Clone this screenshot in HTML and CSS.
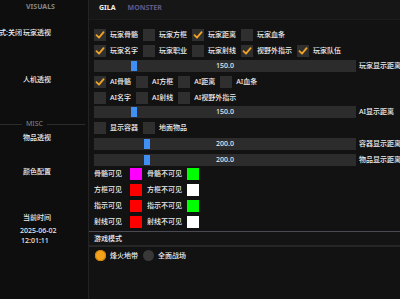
FILE: index.html
```html
<!DOCTYPE html>
<html lang="zh">
<head>
<meta charset="UTF-8">
<title>Visuals</title>
<link rel="stylesheet" href="styles.css">
</head>
<body>

<div class="app">

  <!-- left menu -->
  <aside class="side">
    <div class="side-title">VISUALS</div>
    <div class="side-label side-mode"><span class="mode">模式:关闭</span><span>玩家透视</span></div>
    <div class="side-label gap-ai">人机透视</div>
    <div class="side-sep"><span>MISC</span></div>
    <div class="side-label gap-item">物品透视</div>
    <div class="side-label gap-color">颜色配置</div>
    <div class="side-label gap-time">当前时间</div>
    <div class="side-date">2025-06-02</div>
    <div class="side-clock">12:01:11</div>
  </aside>

  <main class="main">
    <nav class="tabs">
      <span class="tab active">GILA</span>
      <span class="tab">MONSTER</span>
    </nav>

    <div class="content">
      <!-- player -->
      <div class="row">
        <label class="check"><i class="box on"><svg viewBox="0 0 12 12"><polyline points="2.5,6.2 5,8.6 9.6,3.2"/></svg></i>玩家骨骼</label>
        <label class="check"><i class="box"></i>玩家方框</label>
        <label class="check"><i class="box on"><svg viewBox="0 0 12 12"><polyline points="2.5,6.2 5,8.6 9.6,3.2"/></svg></i>玩家距离</label>
        <label class="check"><i class="box"></i>玩家血条</label>
      </div>
      <div class="row">
        <label class="check"><i class="box on"><svg viewBox="0 0 12 12"><polyline points="2.5,6.2 5,8.6 9.6,3.2"/></svg></i>玩家名字</label>
        <label class="check"><i class="box"></i>玩家职业</label>
        <label class="check"><i class="box"></i>玩家射线</label>
        <label class="check"><i class="box on"><svg viewBox="0 0 12 12"><polyline points="2.5,6.2 5,8.6 9.6,3.2"/></svg></i>视野外指示</label>
        <label class="check"><i class="box on"><svg viewBox="0 0 12 12"><polyline points="2.5,6.2 5,8.6 9.6,3.2"/></svg></i>玩家队伍</label>
      </div>
      <div class="slider-row up1">
        <div class="slider"><i class="grab" style="margin-left:37px"></i><span class="value">150.0</span></div>
        <span>玩家显示距离</span>
      </div>

      <!-- ai -->
      <div class="row">
        <label class="check"><i class="box on"><svg viewBox="0 0 12 12"><polyline points="2.5,6.2 5,8.6 9.6,3.2"/></svg></i>AI骨骼</label>
        <label class="check"><i class="box"></i>AI方框</label>
        <label class="check"><i class="box"></i>AI距离</label>
        <label class="check"><i class="box"></i>AI血条</label>
      </div>
      <div class="row">
        <label class="check"><i class="box"></i>AI名字</label>
        <label class="check"><i class="box"></i>AI射线</label>
        <label class="check"><i class="box"></i>AI视野外指示</label>
      </div>
      <div class="slider-row up2">
        <div class="slider"><i class="grab" style="margin-left:37px"></i><span class="value">150.0</span></div>
        <span>AI显示距离</span>
      </div>

      <!-- misc -->
      <div class="row">
        <label class="check"><i class="box"></i>显示容器</label>
        <label class="check"><i class="box"></i>地面物品</label>
      </div>
      <div class="slider-row">
        <div class="slider"><i class="grab" style="margin-left:50px"></i><span class="value">200.0</span></div>
        <span>容器显示距离</span>
      </div>
      <div class="slider-row">
        <div class="slider"><i class="grab" style="margin-left:50px"></i><span class="value">200.0</span></div>
        <span>物品显示距离</span>
      </div>

      <!-- colours -->
      <div class="color-row up2">
        <span class="clabel">骨骼可见</span><i class="swatch magenta"></i>
        <span class="clabel wide">骨骼不可见</span><i class="swatch green"></i>
      </div>
      <div class="color-row">
        <span class="clabel">方框可见</span><i class="swatch red"></i>
        <span class="clabel wide">方框不可见</span><i class="swatch white"></i>
      </div>
      <div class="color-row">
        <span class="clabel">指示可见</span><i class="swatch red"></i>
        <span class="clabel wide">指示不可见</span><i class="swatch green"></i>
      </div>
      <div class="color-row">
        <span class="clabel">射线可见</span><i class="swatch red"></i>
        <span class="clabel wide">射线不可见</span><i class="swatch white"></i>
      </div>

      <div class="mode-head">游戏模式</div>
      <div class="radio-row">
        <label class="radio"><i class="dot on"></i>烽火地带</label>
        <label class="radio"><i class="dot"></i>全面战场</label>
      </div>
    </div>
  </main>

</div>

</body>
</html>
```

FILE: styles.css
```css
body {
  margin: 0;
  background: #121212;
  color: #ededed;
  font-family: "Noto Sans", "Noto Sans CJK SC", sans-serif;
  font-size: 7px;
  font-weight: 500;
  line-height: 10px;
  overflow: hidden;
}

.app {
  display: flex;
  height: 299px;
}

/* sidebar */
.side {
  width: 88px;
  flex: none;
  background: #0e0e0e;
  border-right: 1px solid #232323;
  overflow: hidden;
  white-space: nowrap;
}
.side-title {
  height: 13px;
  line-height: 13px;
  padding-right: 7px;
  text-align: center;
  font-weight: bold;
  color: #858585;
}
.side-label {
  height: 10px;
  padding-left: 23px;
}
.side-mode {
  display: flex;
  margin-top: 15px;
}
.mode {
  margin-left: -31px;
  margin-right: 1px;
}
.gap-ai { margin-top: 37px; }
.gap-item { margin-top: 4px; }
.gap-color { margin-top: 24px; }
.gap-time { margin-top: 36px; }

.side-sep {
  margin-top: 34px;
  height: 10px;
  display: flex;
  align-items: center;
  gap: 4px;
  color: #858585;
  font-weight: normal;
}
.side-sep::before,
.side-sep::after {
  content: "";
  height: 1px;
  background: #2c2c2c;
}
.side-sep::before { width: 22px; }
.side-sep::after { flex: 1; margin-right: 3px; }

.side-date {
  margin-top: 3px;
  padding-left: 20px;
}
.side-clock { padding-left: 21px; }

/* main panel */
.main {
  flex: 1;
  min-width: 0;
  overflow: hidden;
  display: flex;
  flex-direction: column;
}
.tabs {
  height: 16px;
  padding: 3px 0 0 10px;
  background: #161616;
  border-bottom: 1px solid #1d1d1d;
  display: flex;
  gap: 12px;
  font-weight: bold;
}
.tab { color: #5f5a8c; }
.tab.active { color: #f0f0f0; }

.content {
  padding: 9px 0 0 5px;
  display: flex;
  flex-direction: column;
  gap: 4px;
  white-space: nowrap;
}
.up1 { margin-top: -1px; }
.up2 { margin-top: -2px; }

.row {
  height: 12px;
  display: flex;
  align-items: center;
  gap: 5px;
}
.check {
  display: flex;
  align-items: center;
  gap: 4px;
}
.box {
  width: 12px;
  height: 12px;
  flex: none;
  background: #2f2f2f;
}
.box svg {
  display: block;
  width: 12px;
  height: 12px;
}
.box polyline {
  fill: none;
  stroke: #f2a323;
  stroke-width: 1.8;
  stroke-linecap: round;
  stroke-linejoin: round;
}

.slider-row {
  height: 12px;
  display: flex;
  align-items: center;
  gap: 3px;
}
.slider {
  width: 262px;
  height: 12px;
  flex: none;
  background: #2c2c2c;
  display: grid;
  align-items: center;
}
.slider > * { grid-area: 1 / 1; }
.grab {
  width: 6px;
  height: 10px;
  justify-self: start;
  background: #3f8ff5;
}
.value { justify-self: center; }

.color-row {
  height: 12px;
  display: flex;
  align-items: center;
}
.clabel { width: 36px; }
.clabel.wide { width: 40px; }
.swatch {
  width: 12px;
  height: 12px;
  margin-right: 5px;
}
.magenta { background: #ff00ff; }
.green { background: #00ff00; }
.red { background: #ff0000; }
.white { background: #ffffff; }

.mode-head {
  margin: -1px 0 0 -5px;
  padding-left: 5px;
  height: 13px;
  line-height: 13px;
  background: #141414;
  border-top: 1px solid #4a4a55;
  border-bottom: 2px solid #262626;
}

.radio-row {
  margin: -1px 0 0 1px;
  display: flex;
  gap: 5px;
}
.radio {
  display: flex;
  align-items: center;
  gap: 4px;
}
.dot {
  width: 11px;
  height: 11px;
  border-radius: 50%;
  background: #383838;
}
.dot.on {
  background: #f5a21b;
  box-shadow: inset 0 0 0 1px #c98410;
}
```
